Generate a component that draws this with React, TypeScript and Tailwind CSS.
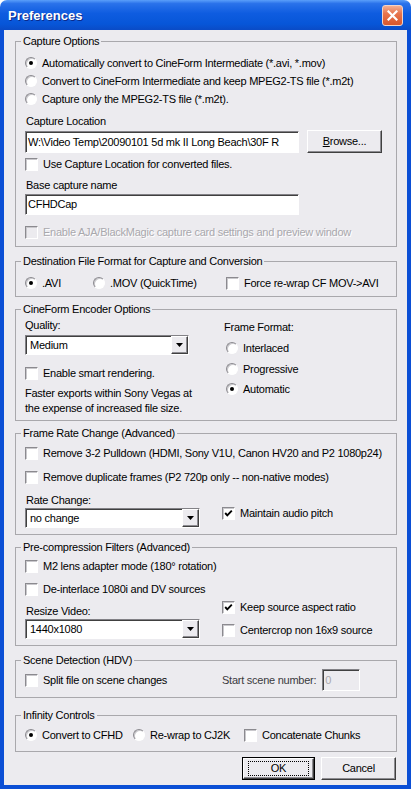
import React from 'react';

const sunken =
  'border border-t-[#828186] border-l-[#828186] border-b-white border-r-white shadow-[inset_1px_1px_0_#404040]';
const raised =
  'border border-t-white border-l-white border-b-[#404040] border-r-[#404040] shadow-[inset_-1px_-1px_0_#8d8c91]';

function Check({ checked = false, disabled = false }: { checked?: boolean; disabled?: boolean }) {
  return (
    <span
      className={`relative flex h-[13px] w-[13px] shrink-0 items-center justify-center border border-t-[#8b8a8f] border-l-[#8b8a8f] border-b-white border-r-white shadow-[inset_1px_1px_0_#c9c8cc] ${
        disabled ? 'bg-[#ecebef]' : 'bg-white'
      }`}
    >
      {checked && (
        <svg width="9" height="9" viewBox="0 0 9 9">
          <polyline points="1.2,4 3.3,6.3 7.8,1.6" fill="none" stroke="#000" strokeWidth="1.9" />
        </svg>
      )}
    </span>
  );
}

function Radio({ checked = false }: { checked?: boolean }) {
  return (
    <span className="flex h-[12px] w-[12px] shrink-0 items-center justify-center rounded-full border border-t-[#8b8a8f] border-l-[#8b8a8f] border-b-white border-r-white bg-white shadow-[inset_1px_1px_0_#c9c8cc]">
      {checked && <span className="h-[4px] w-[4px] rounded-full bg-black" />}
    </span>
  );
}

function CheckRow({
  label,
  checked,
  disabled,
  className = '',
}: {
  label: string;
  checked?: boolean;
  disabled?: boolean;
  className?: string;
}) {
  return (
    <div className={`flex h-[16px] items-center gap-[5px] ${className}`}>
      <Check checked={checked} disabled={disabled} />
      <span className={disabled ? 'text-[#a9a8ad] [text-shadow:1px_1px_0_#fff]' : ''}>{label}</span>
    </div>
  );
}

function RadioRow({ label, checked, className = '' }: { label: string; checked?: boolean; className?: string }) {
  return (
    <div className={`flex h-[16px] items-center gap-[5px] ${className}`}>
      <Radio checked={checked} />
      <span>{label}</span>
    </div>
  );
}

function Combo({ value, className = '' }: { value: string; className?: string }) {
  return (
    <div className={`flex h-[20px] bg-white ${sunken} ${className}`}>
      <div className="flex-1 overflow-hidden whitespace-nowrap pl-[4px] leading-[18px]">{value}</div>
      <div className={`flex h-[18px] w-[17px] items-center justify-center bg-[#ecebef] ${raised}`}>
        <svg width="7" height="4" viewBox="0 0 7 4">
          <polygon points="0,0 7,0 3.5,4" fill="#000" />
        </svg>
      </div>
    </div>
  );
}

function Group({ title, className = '', children }: { title: string; className?: string; children: React.ReactNode }) {
  return (
    <fieldset className={`border border-[#a9a8ac] ${className}`}>
      <legend className="ml-[5px] px-[2px] leading-[13px]">{title}</legend>
      <div className="pl-[9px] pr-[9px]">{children}</div>
    </fieldset>
  );
}

export default function App() {
  return (
    <div className="flex h-[789px] w-[411px] flex-col bg-white font-['Liberation_Sans',Arial,sans-serif] text-[11px] leading-[13px] tracking-[-0.25px] text-black">
      {/* title bar */}
      <div className="flex h-[30px] shrink-0 items-center justify-between rounded-t-[7px] bg-[linear-gradient(to_bottom,#5a9ffa_0%,#2a72ea_12%,#0e5ce0_45%,#0756d8_80%,#0a4bc6_100%)] pl-[8px] pr-[8px]">
        <span className="text-[13px] font-bold tracking-[0px] text-white [text-shadow:1px_1px_0_#0b2a8a]">
          Preferences
        </span>
        <div className="flex h-[21px] w-[21px] items-center justify-center rounded-[3px] border border-[#f3d3c6] bg-[linear-gradient(to_bottom,#f3ae92_0%,#e7754e_40%,#d9572c_100%)]">
          <svg width="11" height="11" viewBox="0 0 11 11">
            <path d="M1.5 1.5 L9.5 9.5 M9.5 1.5 L1.5 9.5" stroke="#fff" strokeWidth="2.2" strokeLinecap="square" />
          </svg>
        </div>
      </div>

      {/* body */}
      <div className="flex flex-1 flex-col border-x-4 border-b-4 border-[#0b4fd5] bg-[#ecebef] pl-[11px] pr-[10px] pt-[5px]">
        <Group title="Capture Options" className="pb-[6px]">
          <RadioRow label="Automatically convert to CineForm Intermediate (*.avi, *.mov)" checked className="mt-[6px] h-[18px]" />
          <RadioRow label="Convert to CineForm Intermediate and keep MPEG2-TS file (*.m2t)" className="h-[18px]" />
          <RadioRow label="Capture only the MPEG2-TS file (*.m2t)." className="h-[18px]" />
          <div className="mt-[7px] h-[13px] pl-[1px]">Capture Location</div>
          <div className="mt-[2px] flex items-center gap-[8px]">
            <div className={`h-[22px] w-[274px] overflow-hidden whitespace-nowrap bg-white pl-[2px] leading-[20px] ${sunken}`}>
              W:\Video Temp\20090101 5d mk II Long Beach\30F R
            </div>
            <div className={`flex h-[23px] w-[75px] items-center justify-center bg-[#ecebef] ${raised}`}>
              <span>
                <span className="underline">B</span>rowse...
              </span>
            </div>
          </div>
          <CheckRow label="Use Capture Location for converted files." className="mt-[3px]" />
          <div className="mt-[7px] h-[13px] pl-[1px]">Base capture name</div>
          <div className={`mt-[2px] h-[21px] w-[274px] bg-white pl-[2px] leading-[19px] ${sunken}`}>CFHDCap</div>
          <CheckRow
            label="Enable AJA/BlackMagic capture card settings and preview window"
            disabled
            className="mt-[9px]"
          />
        </Group>

        <Group title="Destination File Format for Capture and Conversion" className="mt-[8px] pb-[5px]">
          <div className="mt-[7px] flex">
            <RadioRow label=".AVI" checked className="w-[68px]" />
            <RadioRow label=".MOV (QuickTime)" className="w-[133px]" />
            <CheckRow label="Force re-wrap CF MOV->AVI" />
          </div>
        </Group>

        <Group title="CineForm Encoder Options" className="mt-[6px] pb-[4px]">
          <div className="flex">
            <div className="w-[198px]">
              <div className="mt-[3px] h-[13px]">Quality:</div>
              <Combo value="Medium" className="mt-[3px] w-[164px]" />
              <CheckRow label="Enable smart rendering." className="mt-[10px]" />
              <div className="mt-[5px] leading-[15px]">
                Faster exports within Sony Vegas at
                <br />
                the expense of increased file size.
              </div>
            </div>
            <div className="pl-[1px]">
              <div className="mt-[5px] h-[13px]">Frame Format:</div>
              <RadioRow label="Interlaced" className="mt-[6px] ml-[2px]" />
              <RadioRow label="Progressive" className="mt-[5px] ml-[2px]" />
              <RadioRow label="Automatic" checked className="mt-[4px] ml-[2px]" />
            </div>
          </div>
        </Group>

        <Group title="Frame Rate Change (Advanced)" className="mt-[6px] pb-[6px]">
          <CheckRow label="Remove 3-2 Pulldown (HDMI, Sony V1U, Canon HV20 and P2 1080p24)" className="mt-[5px]" />
          <CheckRow label="Remove duplicate frames (P2 720p only -- non-native modes)" className="mt-[8px]" />
          <div className="flex">
            <div className="w-[198px]">
              <div className="mt-[9px] h-[13px] pl-[1px]">Rate Change:</div>
              <Combo value="no change" className="mt-[1px] w-[175px]" />
            </div>
            <CheckRow label="Maintain audio pitch" checked className="mt-[20px] -ml-[1px]" />
          </div>
        </Group>

        <Group title="Pre-compression Filters (Advanced)" className="mt-[6px] pb-[6px]">
          <CheckRow label="M2 lens adapter mode (180° rotation)" className="mt-[4px]" />
          <CheckRow label="De-interlace 1080i and DV sources" className="mt-[7px]" />
          <div className="flex">
            <div className="w-[198px]">
              <div className="mt-[8px] h-[13px] pl-[1px]">Resize Video:</div>
              <Combo value="1440x1080" className="mt-[1px] w-[175px]" />
            </div>
            <div className="-ml-[1px]">
              <CheckRow label="Keep source aspect ratio" checked className="mt-[2px]" />
              <CheckRow label="Centercrop non 16x9 source" className="mt-[7px]" />
            </div>
          </div>
        </Group>

        <Group title="Scene Detection (HDV)" className="mt-[8px] pb-[6px]">
          <div className="mt-[2px] flex h-[22px] items-center">
            <CheckRow label="Split file on scene changes" className="w-[197px]" />
            <span className="text-[#3a3a3e]">Start scene number:</span>
            <div className={`ml-[6px] h-[22px] w-[38px] bg-[#ecebef] pl-[2px] leading-[20px] text-[#a9a8ad] ${sunken}`}>
              0
            </div>
          </div>
        </Group>

        <Group title="Infinity Controls" className="mt-[11px] pb-[8px]">
          <div className="mt-[5px] flex">
            <RadioRow label="Convert to CFHD" checked className="w-[108px]" />
            <RadioRow label="Re-wrap to CJ2K" className="w-[111px]" />
            <CheckRow label="Concatenate Chunks" />
          </div>
        </Group>

        <div className="mt-[5px] flex justify-end gap-[6px] pr-[1px]">
          <div className="flex h-[23px] w-[73px] border border-black">
            <div className={`flex flex-1 items-center justify-center bg-[#ecebef] ${raised}`}>
              <div className="flex h-[15px] w-[61px] items-center justify-center border border-dotted border-black">
                OK
              </div>
            </div>
          </div>
          <div className={`flex h-[23px] w-[75px] items-center justify-center bg-[#ecebef] ${raised}`}>Cancel</div>
        </div>
      </div>
    </div>
  );
}
